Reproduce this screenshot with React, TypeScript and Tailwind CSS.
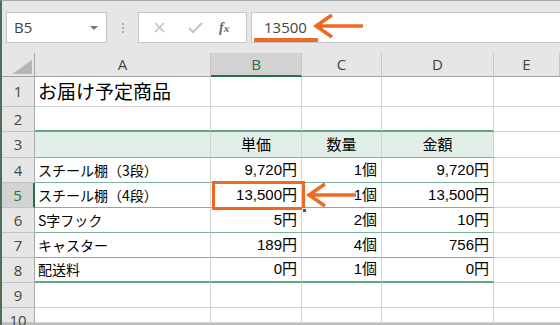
import React from 'react';

interface Row {
    n: number;
    h: string;
    a?: string;
    b?: string;
    c?: string;
    d?: string;
}

const rows: Row[] = [
    { n: 1, h: 'h-[30px]', a: 'お届け予定商品' },
    { n: 2, h: 'h-[25px]' },
    { n: 3, h: 'h-[26px]', b: '単価', c: '数量', d: '金額' },
    { n: 4, h: 'h-[25px]', a: 'スチール棚（3段）', b: '9,720円', c: '1個', d: '9,720円' },
    { n: 5, h: 'h-[25px]', a: 'スチール棚（4段）', b: '13,500円', c: '1個', d: '13,500円' },
    { n: 6, h: 'h-[25px]', a: 'S字フック', b: '5円', c: '2個', d: '10円' },
    { n: 7, h: 'h-[25px]', a: 'キャスター', b: '189円', c: '4個', d: '756円' },
    { n: 8, h: 'h-[25px]', a: '配送料', b: '0円', c: '1個', d: '0円' },
    { n: 9, h: 'h-[25px]' },
    { n: 10, h: 'h-[15px]' },
];

const jp = "font-['Noto_Sans_CJK_JP',sans-serif]";
const num = "font-['Liberation_Sans','Noto_Sans_CJK_JP',sans-serif]";
const hdr = "font-['Open_Sans','Liberation_Sans',sans-serif]";

// bottom border of table cells A-D
const tableBorder = (n: number) => {
    if (n === 2 || n === 8) return 'border-b-2 border-b-[#62a585]';
    if (n >= 3 && n <= 7) return 'border-b border-b-[#7ab59a]';
    return 'border-b border-b-[#d4d4d4]';
};

const App = () => {
    return (
        <div className="relative w-[560px] h-[325px] overflow-hidden bg-[#e6e6e6] border-l-2 border-[#4e6e5d] border-t border-t-[#a8a8a8] select-none">
            {/* formula bar */}
            <div className="flex items-start h-[52px] pl-[4px] pt-[11px]">
                <div className={`flex items-center justify-between w-[101px] h-[31px] bg-white border border-[#c6c6c6] pl-[7px] pr-[8px] text-[15px] text-[#444] ${hdr}`}>
                    <span>B5</span>
                    <span className="w-0 h-0 border-l-[4px] border-r-[4px] border-t-[4px] border-l-transparent border-r-transparent border-t-[#777]" />
                </div>
                <div className="flex flex-col items-center justify-center gap-[2px] w-[31px] h-[31px]">
                    <span className="w-[2px] h-[2px] bg-[#b0b0b0]" />
                    <span className="w-[2px] h-[2px] bg-[#b0b0b0]" />
                    <span className="w-[2px] h-[2px] bg-[#b0b0b0]" />
                </div>
                <div className="flex items-center w-[109px] h-[31px] bg-white border border-[#c6c6c6]">
                    <svg width="36" height="29" viewBox="0 0 36 29" className="ml-[4px]">
                        <path d="M12 10 L21 19 M21 10 L12 19" stroke="#c3c3c3" strokeWidth="1.6" />
                    </svg>
                    <svg width="30" height="29" viewBox="0 0 30 29" className="ml-[2px]">
                        <path d="M8 15 L12 19 L21 10" stroke="#c3c3c3" strokeWidth="2" fill="none" />
                    </svg>
                    <span className="ml-[8px] text-[14px] italic font-bold text-[#666] font-['Liberation_Serif',serif]">
                        f<span className="text-[11px]">x</span>
                    </span>
                </div>
                <div className={`flex items-center flex-1 h-[31px] ml-[4px] bg-white border border-[#c6c6c6] border-r-0 pl-[12px] text-[15px] text-[#444] ${hdr}`}>
                    13500
                </div>
            </div>

            {/* sheet */}
            <div className="grid grid-cols-[33px_176px_91px_80px_112px_66px] bg-white">
                {/* column headers */}
                <div className="relative h-[24px] bg-[#e6e6e6] border-r border-r-[#a8a8a8] border-b border-b-[#a0a0a0]">
                    <svg className="absolute right-[2px] bottom-[2px]" width="20" height="14" viewBox="0 0 20 14">
                        <path d="M20 0 L20 14 L0 14 Z" fill="#b5b5b5" />
                    </svg>
                </div>
                {['A', 'B', 'C', 'D', 'E'].map((c) => (
                    <div
                        key={c}
                        className={`flex items-center justify-center h-[24px] text-[15px] ${hdr} ${c === 'B'
                                ? 'bg-[#d2d2d2] text-[#217346] border-b-2 border-b-[#217346] border-r border-r-[#c6c6c6]'
                                : 'bg-[#e6e6e6] text-[#444] border-b border-b-[#a0a0a0] border-r border-r-[#c6c6c6]'
                            }`}
                    >
                        {c}
                    </div>
                ))}

                {rows.map((r) => {
                    const fill = r.n === 3 ? 'bg-[#e2efe9]' : 'bg-white';
                    const cellBase = `${r.h} ${tableBorder(r.n)} border-r border-r-[#d4d4d4] ${fill}`;
                    return (
                        <React.Fragment key={r.n}>
                            <div
                                className={`flex justify-center ${r.h} text-[15px] ${hdr} border-b border-b-[#c3c3c3] ${r.n === 5
                                        ? 'bg-[#d2d2d2] text-[#217346] border-r-2 border-r-[#217346]'
                                        : 'bg-[#e6e6e6] text-[#444] border-r border-r-[#a8a8a8]'
                                    } ${r.n === 10 ? 'items-start leading-[20px] pt-[2px]' : 'items-center'}`}
                            >
                                {r.n}
                            </div>
                            <div className={`flex items-center pl-[3px] whitespace-nowrap text-black ${jp} ${r.n === 1 ? 'text-[19px]' : 'text-[14px]'} ${cellBase}`}>
                                {r.a}
                            </div>
                            {(['b', 'c', 'd'] as const).map((k) => (
                                <div
                                    key={k}
                                    className={`flex items-center whitespace-nowrap text-black text-[15px] ${r.n === 3 ? `justify-center ${jp}` : `justify-end pr-[4px] ${num}`
                                        } ${cellBase}`}
                                >
                                    {r[k]}
                                </div>
                            ))}
                            <div className={`${r.h} bg-white border-b border-b-[#d4d4d4]`} />
                        </React.Fragment>
                    );
                })}
            </div>
            <div className="h-[2px] bg-[#bcbcbc]" />

            {/* selected cell B5 */}
            <div className="absolute left-[210px] top-[180px] w-[93px] h-[29px] border-[3px] border-[#ee6a22]" />
            <div className="absolute left-[300px] top-[207px] w-[5px] h-[5px] bg-[#217346] border border-white" />

            {/* callouts */}
            <svg className="absolute left-0 top-0 pointer-events-none" width="560" height="325" viewBox="0 0 560 325">
                <rect x="252" y="37" width="64" height="4" fill="#ee6a22" />
                <path d="M314 25 L361 25 M330 14 L314 25 L330 36" stroke="#ee6a22" strokeWidth="3.5" fill="none" />
                <path d="M307 194 L354 194 M323 183 L307 194 L323 205" stroke="#ee6a22" strokeWidth="3.5" fill="none" />
            </svg>
        </div>
    );
};

export default App;
